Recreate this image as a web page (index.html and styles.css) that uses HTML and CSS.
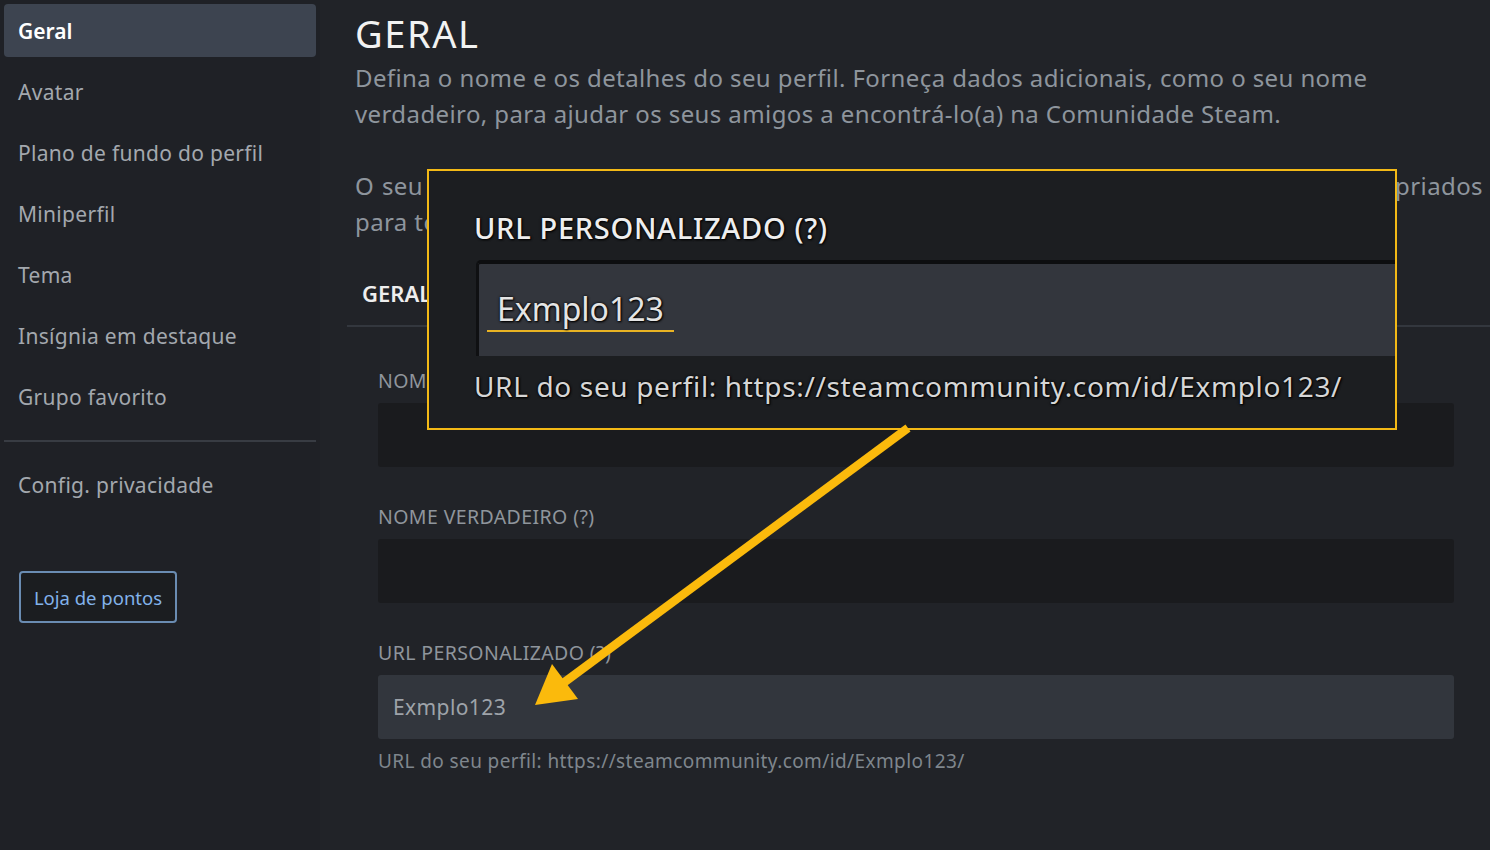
FILE: index.html
```html
<!DOCTYPE html>
<html lang="pt">
<head>
<meta charset="utf-8">
<title>Geral</title>
<link rel="stylesheet" href="styles.css">
</head>
<body>
<div class="page">
  <nav class="sidebar">
    <a class="nav-item active">Geral</a>
    <a class="nav-item">Avatar</a>
    <a class="nav-item">Plano de fundo do perfil</a>
    <a class="nav-item">Miniperfil</a>
    <a class="nav-item">Tema</a>
    <a class="nav-item">Insígnia em destaque</a>
    <a class="nav-item">Grupo favorito</a>
    <div class="nav-sep"></div>
    <a class="nav-item">Config. privacidade</a>
    <button class="points-btn">Loja de pontos</button>
  </nav>

  <main class="main">
    <h1 class="title">GERAL</h1>
    <p class="desc">Defina o nome e os detalhes do seu perfil. Forneça dados adicionais, como o seu nome<br>verdadeiro, para ajudar os seus amigos a encontrá-lo(a) na Comunidade Steam.</p>
    <p class="desc desc-2"><span class="line-full">O seu nome de perfil e o seu avatar representam-no em toda a Steam e devem ser apropriados</span><span class="line">para todos os públicos.</span></p>

    <div class="tabs">
      <div class="tab">GERAL</div>
    </div>

    <form class="form">
      <label class="field-label">NOME DO PERFIL</label>
      <div class="field-input dark"></div>

      <label class="field-label">NOME VERDADEIRO (?)</label>
      <div class="field-input dark"></div>

      <label class="field-label">URL PERSONALIZADO (?)</label>
      <div class="field-input filled">Exmplo123</div>
      <div class="field-help">URL do seu perfil: https://steamcommunity.com/id/Exmplo123/</div>
    </form>
  </main>
</div>

<div class="zoom-box">
  <div class="zoom-label">URL PERSONALIZADO (?)</div>
  <div class="zoom-input"><span class="zoom-value">Exmplo123</span></div>
  <div class="zoom-help">URL do seu perfil: https://steamcommunity.com/id/Exmplo123/</div>
</div>

<svg class="arrow" width="1490" height="850" viewBox="0 0 1490 850" aria-hidden="true">
  <line x1="908" y1="428" x2="562" y2="684" stroke="#fbba0c" stroke-width="8.5"/>
  <polygon points="535,705 552,664 578,699" fill="#fbba0c"/>
</svg>
</body>
</html>
```

FILE: styles.css
```css
* { box-sizing: border-box; }

html, body {
  margin: 0;
  padding: 0;
  width: 1490px;
  height: 850px;
  overflow: hidden;
  background: #212328;
  font-family: "Noto Sans", "Liberation Sans", Arial, sans-serif;
}

.page {
  display: flex;
  height: 850px;
}

.sidebar {
  width: 320px;
  flex: none;
  padding: 4px 4px 0 4px;
  display: flex;
  flex-direction: column;
  background: #1f2126;
}

.nav-item {
  display: block;
  height: 53px;
  line-height: 55px;
  margin-bottom: 8px;
  padding-left: 14px;
  border-radius: 4px;
  font-size: 21px;
  letter-spacing: 0.3px;
  color: #a3a8ae;
}

.nav-item.active {
  background: #3d4450;
  color: #ffffff;
  font-weight: 600;
  letter-spacing: 0;
}

.nav-sep {
  height: 2px;
  background: #383c43;
  margin: 9px 0 16px 0;
}

.points-btn {
  align-self: flex-start;
  margin: 52px 0 0 15px;
  width: 158px;
  height: 52px;
  background: #1b1d20;
  border: 2px solid #6a8cb2;
  border-radius: 4px;
  color: #82b2ea;
  font-family: inherit;
  font-size: 18.5px;
  padding: 0;
}

.main {
  flex: 1;
  padding: 10px 0 0 27px;
  overflow: hidden;
}

.title {
  margin: 0 0 4px 8px;
  font-size: 38px;
  line-height: 46px;
  font-weight: 400;
  letter-spacing: 1.6px;
  color: #f2f2f2;
}

.desc {
  margin: 0 0 0 8px;
  font-size: 24px;
  line-height: 36px;
  letter-spacing: 0.4px;
  color: #8e959d;
  white-space: nowrap;
}

.desc-2 {
  margin-top: 36px;
  width: 1128px;
  white-space: normal;
}

.line-full {
  display: block;
  text-align: justify;
  text-align-last: justify;
}

.line {
  display: block;
}

.tabs {
  height: 87px;
  border-bottom: 2px solid #33373e;
  display: flex;
  align-items: flex-end;
}

.tab {
  margin-left: 15px;
  height: 47px;
  font-size: 22px;
  font-weight: 600;
  color: #eeeeee;
}

.form {
  display: flex;
  flex-direction: column;
  padding: 43px 0 0 31px;
  width: 1107px;
}

.field-label {
  font-size: 19.5px;
  line-height: 22px;
  letter-spacing: 0.4px;
  color: #8f959c;
  margin-bottom: 11px;
}

.field-input {
  height: 64px;
  border-radius: 3px;
  margin-bottom: 39px;
}

.field-input.dark {
  background: #1a1b1e;
}

.field-input.filled {
  background: #32363d;
  margin-bottom: 11px;
  padding-left: 15px;
  line-height: 64px;
  font-size: 21px;
  letter-spacing: 0.4px;
  color: #9ea3a9;
}

.field-help {
  font-size: 19px;
  line-height: 22px;
  letter-spacing: 0.4px;
  color: #7f868d;
}

.zoom-box {
  position: absolute;
  left: 427px;
  top: 169px;
  width: 970px;
  height: 261px;
  border: 2px solid #f3b916;
  background: #1c1e21;
  overflow: hidden;
  padding: 38px 0 0 45px;
  text-shadow: 0 0 3px #000, 1px 1px 2px #000;
}

.zoom-label {
  font-size: 29px;
  line-height: 38px;
  letter-spacing: 0.7px;
  color: #eeeeee;
  font-weight: 500;
}

.zoom-input {
  margin: 13px 0 0 2px;
  width: calc(100% + 20px);
  height: 96px;
  background: #33363d;
  border-top: 4px solid #0d0e10;
  border-left: 3px solid #0f1012;
  border-radius: 5px 0 0 0;
  padding: 24px 0 0 8px;
}

.zoom-value {
  display: inline-block;
  font-size: 32px;
  line-height: 42px;
  color: #e4e4e4;
  padding: 0 10px 0 10px;
  border-bottom: 2px solid #e9b323;
}

.zoom-help {
  margin-top: 12px;
  font-size: 28px;
  line-height: 36px;
  letter-spacing: 0.65px;
  color: #d6d6d6;
}

.arrow {
  position: absolute;
  left: 0;
  top: 0;
  pointer-events: none;
}
```
